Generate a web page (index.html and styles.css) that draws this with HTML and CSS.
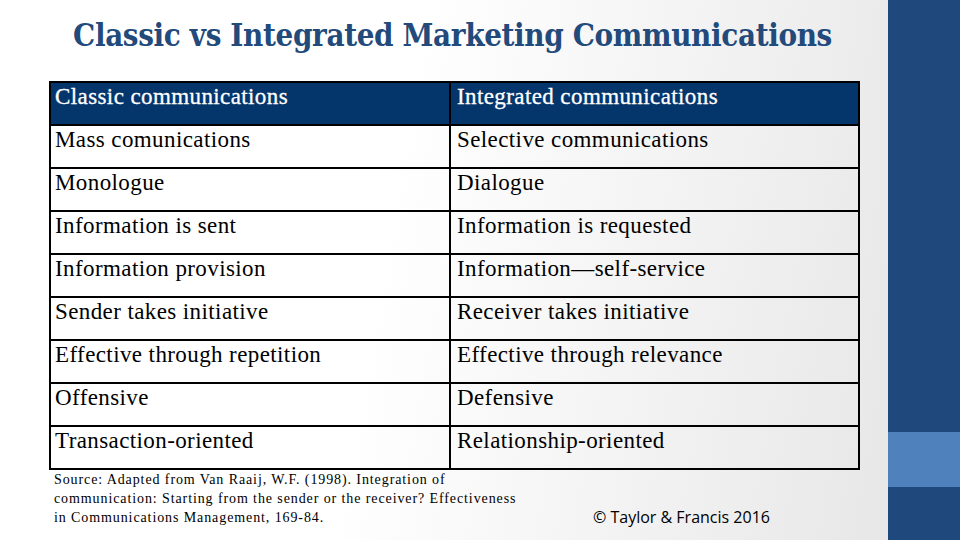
FILE: index.html
```html
<!DOCTYPE html>
<html>
<head>
<meta charset="utf-8">
<link rel="stylesheet" href="styles.css">
</head>
<body>
<div class="slide">
  <main class="main">
    <h1 class="title">Classic vs Integrated Marketing Communications</h1>
    <table class="grid">
      <thead>
        <tr><th>Classic communications</th><th>Integrated communications</th></tr>
      </thead>
      <tbody>
        <tr><td>Mass comunications</td><td>Selective communications</td></tr>
        <tr><td>Monologue</td><td>Dialogue</td></tr>
        <tr><td>Information is sent</td><td>Information is requested</td></tr>
        <tr><td>Information provision</td><td>Information—self-service</td></tr>
        <tr><td>Sender takes initiative</td><td>Receiver takes initiative</td></tr>
        <tr><td>Effective through repetition</td><td>Effective through relevance</td></tr>
        <tr><td>Offensive</td><td>Defensive</td></tr>
        <tr><td>Transaction-oriented</td><td>Relationship-oriented</td></tr>
      </tbody>
    </table>
    <div class="foot">
      <p class="source">Source: Adapted from Van Raaij, W.F. (1998). Integration of communication: Starting from the sender or the receiver? Effectiveness in Communications Management, 169-84.</p>
      <p class="copy">© Taylor &amp; Francis 2016</p>
    </div>
  </main>
  <aside class="side">
    <div class="side-dark top"></div>
    <div class="side-light"></div>
    <div class="side-dark bottom"></div>
  </aside>
</div>
</body>
</html>
```
FILE: styles.css
```css
html, body {
  margin: 0;
  padding: 0;
}
.slide {
  width: 960px;
  height: 540px;
  display: flex;
  overflow: hidden;
  background: linear-gradient(100deg, #ffffff 0%, #ffffff 40%, #e4e4e4 100%);
}
.main {
  width: 888px;
  display: flex;
  flex-direction: column;
}
.title {
  margin: 13px 0 0 0;
  height: 44px;
  line-height: 44px;
  font-family: "DejaVu Serif Condensed", "DejaVu Serif", serif;
  font-weight: bold;
  font-size: 31px;
  color: #224a7b;
  text-align: center;
  padding-left: 17px;
  letter-spacing: -0.35px;
  white-space: nowrap;
}
.grid {
  margin: 24px 0 0 49px;
  border-collapse: collapse;
  width: 811px;
  table-layout: fixed;
  font-family: "Liberation Serif", "Times New Roman", serif;
  font-size: 23px;
  letter-spacing: 0.4px;
}
.grid th, .grid td {
  border: 2px solid #000;
  height: 43px;
  padding: 1px 6px 0 4px;
  text-align: left;
  vertical-align: top;
  font-weight: normal;
  color: #000;
  box-sizing: border-box;
  line-height: 26px;
}
.grid th:last-child, .grid td:last-child {
  padding-left: 6px;
}
.grid th {
  background: #04356b;
  color: #fff;
  -webkit-text-stroke: 0.3px #fff;
}
.grid th:first-child, .grid td:first-child {
  width: 400px;
}
.foot {
  display: flex;
  align-items: flex-end;
}
.source {
  margin: 0 0 0 54px;
  width: 475px;
  font-family: "Liberation Serif", "Times New Roman", serif;
  font-size: 14px;
  letter-spacing: 0.9px;
  line-height: 19px;
  color: #000;
}
.copy {
  margin: 0 0 -1px 64px;
  font-family: "Open Sans", "Liberation Sans", sans-serif;
  font-size: 16px;
  line-height: 22px;
  color: #000;
  white-space: nowrap;
}
.side {
  width: 72px;
  display: flex;
  flex-direction: column;
}
.side-dark {
  background: #1f497d;
}
.side-dark.top {
  height: 432px;
}
.side-light {
  height: 55px;
  background: #4f81bd;
}
.side-dark.bottom {
  flex: 1;
}
```
